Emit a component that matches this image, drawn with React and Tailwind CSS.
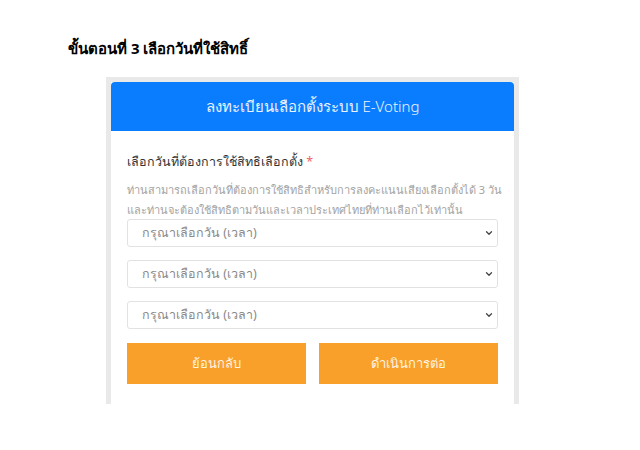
import { ChevronDown } from 'lucide-react';

const thai = { fontFamily: '"Noto Sans", "Liberation Sans", sans-serif' };

const DaySelect = () => (
    <div className="relative h-[28px] w-full">
        <select
            defaultValue=""
            className="h-full w-full appearance-none rounded-[3px] border border-[#e2e2e2] bg-white pl-[14px] text-[12.5px] text-[#8a8a8a] outline-none"
        >
            <option value="">กรุณาเลือกวัน (เวลา)</option>
        </select>
        <ChevronDown className="pointer-events-none absolute right-[4px] top-[9px] h-[10px] w-[10px] text-[#444]" strokeWidth={3} />
    </div>
);

export default function App() {
    return (
        <div className="h-[450px] w-[640px] bg-white" style={thai}>
            <h1 className="pl-[68px] pt-[36px] text-[15px] font-bold leading-[24px] text-black">
                ขั้นตอนที่ 3 เลือกวันที่ใช้สิทธิ์
            </h1>

            <div className="ml-[106px] mt-[17px] h-[327px] w-[413px] bg-[#e9e9e9] px-[5px] pt-[5px]">
                <div className="h-full overflow-hidden bg-white">
                    <div className="flex h-[49px] items-center justify-center rounded-t-[4px] bg-[#0a7dff] text-[15px] font-light text-[#eaf3ff]">
                        ลงทะเบียนเลือกตั้งระบบ E-Voting
                    </div>

                    <div className="px-[16px] pt-[21px]">
                        <div className="text-[12.5px] leading-[20px] text-[#333]">
                            เลือกวันที่ต้องการใช้สิทธิเลือกตั้ง <span className="text-[#f06565]">*</span>
                        </div>
                        <p className="mt-[8px] whitespace-nowrap text-[11px] leading-[20px] text-[#a3a3a3]">
                            ท่านสามารถเลือกวันที่ต้องการใช้สิทธิสำหรับการลงคะแนนเสียงเลือกตั้งได้ 3 วัน
                            <br />
                            และท่านจะต้องใช้สิทธิตามวันและเวลาประเทศไทยที่ท่านเลือกไว้เท่านั้น
                        </p>

                        <div className="-mt-[1px] flex flex-col gap-[13px]">
                            <DaySelect />
                            <DaySelect />
                            <DaySelect />
                        </div>

                        <div className="mt-[14px] flex gap-[13px]">
                            <button className="h-[41px] flex-1 bg-[#f9a02a] text-[13px] font-light text-[#fff3e0]">
                                ย้อนกลับ
                            </button>
                            <button className="h-[41px] flex-1 bg-[#f9a02a] text-[13px] font-light text-[#fff3e0]">
                                ดำเนินการต่อ
                            </button>
                        </div>
                    </div>
                </div>
            </div>
        </div>
    );
}
